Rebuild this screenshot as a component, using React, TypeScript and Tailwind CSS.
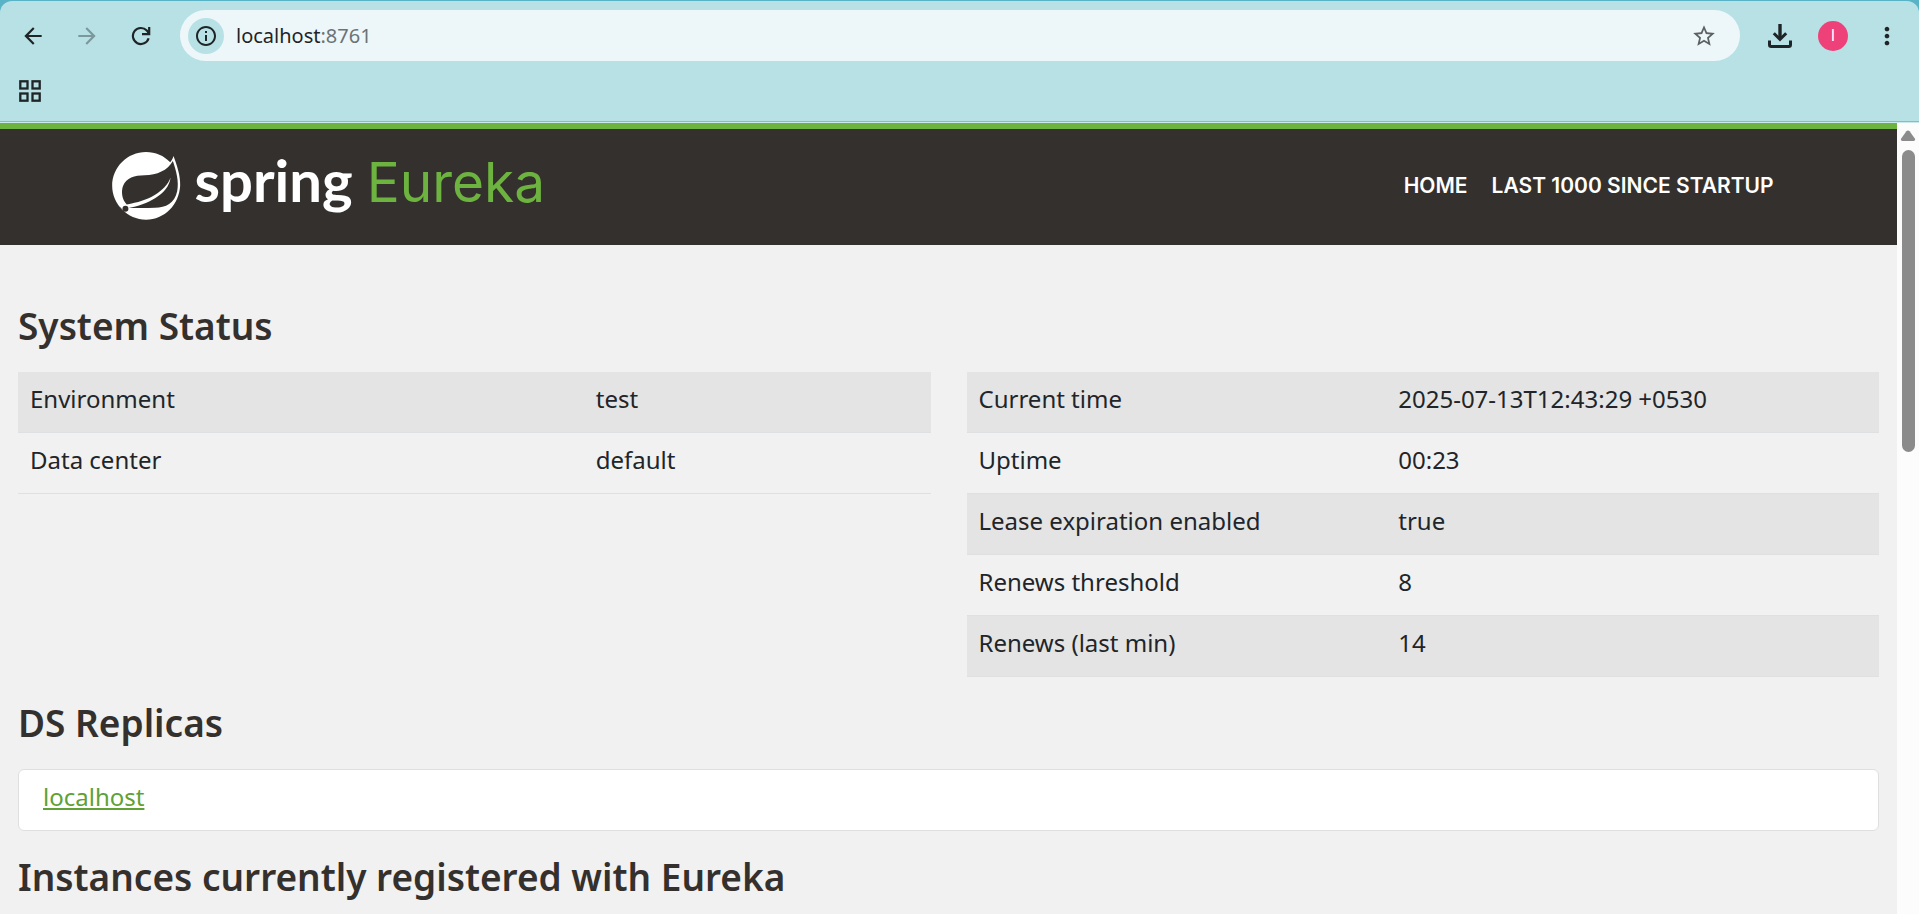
import { MdArrowBack, MdArrowForward, MdInfoOutline, MdMoreVert, MdStarBorder } from "react-icons/md";

type Row = { label: string; value: string };

const environmentRows: Row[] = [
  { label: "Environment", value: "test" },
  { label: "Data center", value: "default" },
];

const runtimeRows: Row[] = [
  { label: "Current time", value: "2025-07-13T12:43:29 +0530" },
  { label: "Uptime", value: "00:23" },
  { label: "Lease expiration enabled", value: "true" },
  { label: "Renews threshold", value: "8" },
  { label: "Renews (last min)", value: "14" },
];

function ReloadIcon() {
  return (
    <svg viewBox="0 0 20 20" className="size-5" fill="none" stroke="currentColor" strokeWidth="2.2" aria-hidden="true">
      <path d="M17.6 12.2A8 8 0 1 1 15.8 4.6L18 7" />
      <path d="M18.2 1v7.2H11" />
      <path d="M14.6 8.2 18.2 4.6v3.6z" fill="currentColor" stroke="none" />
    </svg>
  );
}

function DownloadIcon() {
  return (
    <svg viewBox="0 0 24 24" className="size-6" fill="none" stroke="currentColor" strokeWidth="3" aria-hidden="true">
      <path d="M12 0v15" strokeWidth="3.4" />
      <path d="M5.8 9.2 12 15.4l6.2-6.2" />
      <path d="M1.5 16.5v4.2c0 1.1.7 1.8 1.8 1.8h17.4c1.1 0 1.8-.7 1.8-1.8v-4.2" />
    </svg>
  );
}

function AppsIcon() {
  return (
    <svg viewBox="0 0 22 22" className="size-[22px]" fill="none" stroke="currentColor" strokeWidth="2.3" aria-hidden="true">
      <rect x="1.3" y="1.3" width="7.2" height="7.2" />
      <rect x="13.5" y="1.3" width="7.2" height="7.2" />
      <rect x="1.3" y="13.5" width="7.2" height="7.2" />
      <rect x="13.5" y="13.5" width="7.2" height="7.2" />
    </svg>
  );
}

function LeafMark() {
  return (
    <svg viewBox="36 125 207 205" className="h-[68px] w-[69px]" aria-hidden="true">
      <path
        fill="#fff"
        d="M221 137C231 165 242 195 241 226C238 284 194 329 138 329C82 329 36 283 36 227C36 171 82 125 138 125C167 125 192 136 211 156C215 151 219 144 221 137Z"
      />
      <path
        fill="#34302d"
        d="M219 152C229 181 238 215 232 243C224 280 198 292 165 293C135 294 112 294 86 294C140 284 205 255 212 203C196 244 145 274 80 283C66 270 62 245 69 227C79 203 103 195 134 195C171 194 203 181 219 152Z"
      />
      <circle cx="76" cy="296" r="9" fill="#34302d" />
      <path d="M58 290 78 312" stroke="#34302d" strokeWidth="2" />
    </svg>
  );
}

function SectionTitle({ children }: { children: string }) {
  return (
    <h1 className="font-['Noto_Sans',sans-serif] text-[37px] leading-[42px] font-semibold text-[#34302d]">{children}</h1>
  );
}

function StatusTable({ rows, name, labelWidth }: { rows: Row[]; name: string; labelWidth: string }) {
  return (
    <table aria-label={name} className="w-full table-fixed border-collapse text-left">
      <colgroup>
        <col className={labelWidth} />
        <col />
      </colgroup>
      <tbody>
        {rows.map((row) => (
          <tr key={row.label} className="border-b border-[#dee0e2] odd:bg-[#e4e4e4]">
            <th scope="row" className="px-3 pt-[9px] pb-[15px] font-normal">
              {row.label}
            </th>
            <td className="px-3 pt-[9px] pb-[15px]">{row.value}</td>
          </tr>
        ))}
      </tbody>
    </table>
  );
}

function BrowserBar() {
  return (
    <header className="shrink-0 bg-[#58b3c7] pt-px text-[#1f2426]">
      <div className="rounded-t-xl border-b border-[#8fb9c1] bg-[#b8e1e6]">
        <div className="flex h-[60px] items-center pt-[9px] pr-[18px] pl-5">
          <nav aria-label="Browser" className="flex w-40 items-center gap-7">
            <button type="button" aria-label="Back" className="grid size-[26px] place-items-center">
              <MdArrowBack className="size-[26px]" />
            </button>
            <button type="button" aria-label="Forward" className="grid size-[26px] place-items-center text-[#7d989d]">
              <MdArrowForward className="size-[26px]" />
            </button>
            <button type="button" aria-label="Reload" className="grid size-[26px] place-items-center">
              <ReloadIcon />
            </button>
          </nav>
          <div className="flex h-[51px] grow items-center rounded-full bg-[#edf7f9] pr-[23px] pl-2">
            <button type="button" aria-label="Site information" className="grid size-9 place-items-center rounded-full bg-[#b8e1e6]">
              <MdInfoOutline className="size-6" />
            </button>
            <div className="grow pl-3 font-['Noto_Sans',sans-serif] text-[20px] leading-7">
              localhost<span className="text-[#6b7376]">:8761</span>
            </div>
            <button type="button" aria-label="Bookmark this page" className="text-[#5b6063]">
              <MdStarBorder className="size-[26px]" />
            </button>
          </div>
          <div className="flex items-center pl-7">
            <button type="button" aria-label="Downloads">
              <DownloadIcon />
            </button>
            <button
              type="button"
              aria-label="Profile"
              className="ml-[26px] grid size-[30px] place-items-center rounded-full bg-[#ee4179] font-['Roboto',sans-serif] text-base text-white"
            >
              I
            </button>
            <button type="button" aria-label="Menu" className="ml-[25px]">
              <MdMoreVert className="size-7" />
            </button>
          </div>
        </div>
        <div className="flex h-[60px] items-center pl-[19px]">
          <button type="button" aria-label="Apps">
            <AppsIcon />
          </button>
        </div>
      </div>
      <div className="h-px bg-[#c9e9ed]" />
    </header>
  );
}

function ScrollTrack() {
  return (
    <div className="flex w-[22px] shrink-0 flex-col items-center bg-[#fcfcfc] pt-[7px]" aria-hidden="true">
      <svg viewBox="0 0 16 12" className="h-3 w-4 text-[#8b8b8b]" fill="currentColor">
        <path d="M6.4 1.2a2 2 0 0 1 3.2 0l5.2 7.4c.7 1.1.2 2.4-1.2 2.4H2.4C1 11 .5 9.7 1.2 8.6z" />
      </svg>
      <div className="mt-2 h-[302px] w-[13px] rounded-full bg-[#8b8b8b]" />
    </div>
  );
}

export default function App() {
  return (
    <div className="flex h-screen flex-col overflow-hidden">
      <BrowserBar />
      <div className="flex min-h-0 grow">
        <div className="min-w-0 grow overflow-hidden bg-[#f1f1f1] font-['Noto_Sans',sans-serif] text-[24px] leading-9 text-[#212529]">
          <div className="border-t-6 border-[#6db33f] bg-[#34302d]">
            <div className="mx-auto flex h-[116px] max-w-[1674px] items-center justify-between pb-0.5">
              <a href="#home" aria-label="Spring Eureka" className="flex items-center">
                <LeafMark />
                <span className="flex items-baseline pb-3 pl-3.5 leading-none">
                  <span className="font-['Lato',sans-serif] text-[58px] font-bold text-white">spring</span>
                  <span className="pl-3.5 font-['Inter',sans-serif] text-[55px] text-[#6db33f]">Eureka</span>
                </span>
              </a>
              <nav aria-label="Main" className="flex gap-6 pr-3 font-['Inter',sans-serif] text-[21px] font-semibold text-white">
                <a href="#home">HOME</a>
                <a href="#lastn">LAST 1000 SINCE STARTUP</a>
              </nav>
            </div>
          </div>
          <main className="px-[18px] pt-[60px]">
            <SectionTitle>System Status</SectionTitle>
            <div className="my-[25px] grid grid-cols-2 items-start gap-9">
              <StatusTable rows={environmentRows} name="Environment" labelWidth="w-[62%]" />
              <StatusTable rows={runtimeRows} name="Runtime" labelWidth="w-[46%]" />
            </div>
            <SectionTitle>DS Replicas</SectionTitle>
            <ul className="my-[25px] rounded-md border border-[#dfdfdf] bg-white px-6 pt-[9px] pb-[15px]">
              <li>
                <a href="#localhost" className="text-[#5fa134] underline decoration-2 underline-offset-2">
                  localhost
                </a>
              </li>
            </ul>
            <SectionTitle>Instances currently registered with Eureka</SectionTitle>
          </main>
        </div>
        <ScrollTrack />
      </div>
    </div>
  );
}
